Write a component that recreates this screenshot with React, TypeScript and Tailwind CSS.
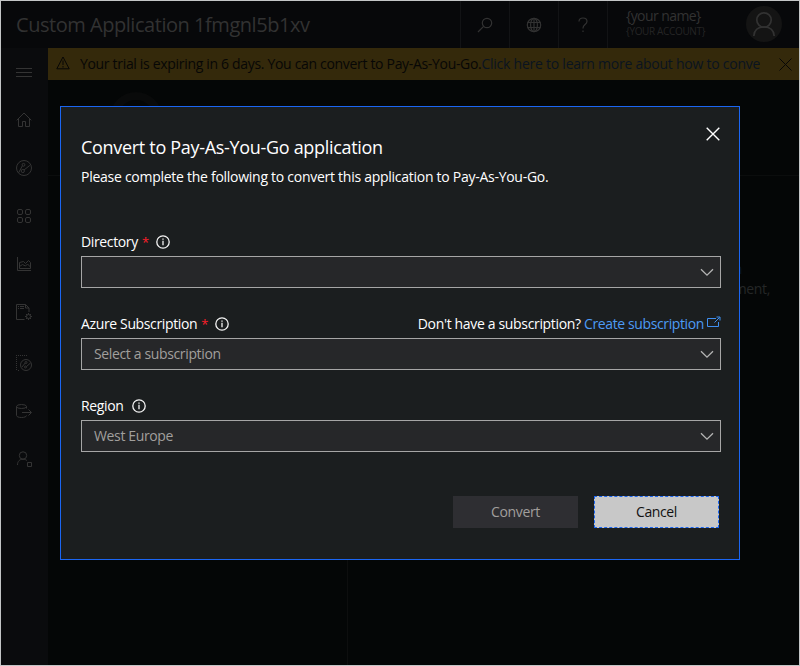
import type { ReactNode } from "react";

const stroke = { fill: "none", stroke: "currentColor", strokeWidth: 1 } as const;

function Chevron() {
  return (
    <svg width="14" height="9" viewBox="0 0 14 9" {...stroke} strokeWidth={1.3} className="text-[#b4b4b4]">
      <path d="M1 1.200 7 7.200 13 1.200" />
    </svg>
  );
}

function Info() {
  return (
    <svg width="14" height="14" viewBox="0 0 14 14" {...stroke} strokeWidth={1.3} className="text-[#f4f4f4]">
      <circle cx="7" cy="7" r="6.2" />
      <path d="M7 5.800v4.400M7 3.600v1.200" />
    </svg>
  );
}

function Select({ children }: { children?: ReactNode }) {
  return (
    <div className="flex h-8 items-center justify-between border border-[#a6a6a6] bg-[#262729] pr-[6px] pl-3 text-[#a19f9d]">
      <span>{children}</span>
      <Chevron />
    </div>
  );
}

function Cell({ children }: { children: ReactNode }) {
  return <div className="flex w-[49px] items-center justify-center border-l border-[#121315]">{children}</div>;
}

function Sidebar() {
  return (
    <nav className="flex w-[47px] shrink-0 flex-col bg-[#0a0b0d] pl-[15px] text-[#343434]">
      <svg width="16" height="48" viewBox="0 0 16 48" {...stroke} className="shrink-0">
        <path d="M0 20.500h16M0 24.500h16M0 28.500h16" />
      </svg>
      <svg width="16" height="48" viewBox="0 0 16 48" {...stroke} className="shrink-0">
        <path d="M.7 24.300 8 17l7.300 7.300M2.500 22.500v8h4v-5h3v5h4v-8" />
      </svg>
      <svg width="16" height="48" viewBox="0 0 16 48" {...stroke} className="shrink-0">
        <circle cx="8" cy="24" r="7.500" />
        <circle cx="7.500" cy="20.800" r="1.400" />
        <circle cx="6.800" cy="27" r="1.600" />
        <path d="m2.600 28.800 3.800-7M8 26l5.800-4.600" />
      </svg>
      <svg width="16" height="48" viewBox="0 0 16 48" {...stroke} className="shrink-0">
        <rect x="1.500" y="17.500" width="5" height="5" rx="1.5" />
        <rect x="9.500" y="17.500" width="5" height="5" rx="1.5" />
        <rect x="1.500" y="25.500" width="5" height="5" rx="1.5" />
        <rect x="9.500" y="25.500" width="5" height="5" rx="1.5" />
      </svg>
      <svg width="16" height="48" viewBox="0 0 16 48" {...stroke} className="shrink-0">
        <path d="M1.500 17v13.500H15M3.500 28.500v-6l4-1 2 2 3-3 2 2v6zM3.500 26.500l3-2 3 1.500 2-2 3 3" />
      </svg>
      <svg width="16" height="48" viewBox="0 0 16 48" {...stroke} className="shrink-0">
        <path d="M8.500 31.500h-8v-15h9l3.500 3.500v4M9.500 16.500V20H13" />
        <path d="M2 18.500h1M4 18.500h4M2 20.500h1M4 20.500h4" />
        <circle cx="12.500" cy="28.500" r="2" />
        <path d="M12.500 25v1.500M12.500 30.500V32M9 28.500h1.500M14.500 28.500H16M10 26l1 1M14 30l1 1M15 26l-1 1M11 30l-1 1" />
      </svg>
      <svg width="16" height="54" viewBox="0 0 16 54" {...stroke} className="shrink-0">
        <path d="M0 19.500H12M.5 21v14M2 34.500H4" strokeDasharray="1 1" />
        <circle cx="10" cy="29" r="5.500" />
        <circle cx="10" cy="26.500" r="1" />
        <circle cx="9.500" cy="31" r="1" />
        <path d="m6 31 3.200-4M10.500 30.500l4-3.500" />
      </svg>
      <svg width="16" height="45" viewBox="0 0 16 45" {...stroke} className="shrink-0">
        <ellipse cx="5.500" cy="16.500" rx="5" ry="2" />
        <path d="M.5 16.500v9c0 1.200 2.200 2 5 2s5-.8 5-2M10.500 16.500v2M6 22.500h9M12.500 19.500l3 3-3 3" />
      </svg>
      <svg width="16" height="48" viewBox="0 0 16 48" {...stroke} className="shrink-0">
        <circle cx="7" cy="20.500" r="3.700" />
        <path d="M1.500 30c0-4 2.300-5.800 5.500-5.800 1.700 0 3 .5 4 1.500M11.500 27.500h4v4h-4z" />
      </svg>
    </nav>
  );
}

export default function App() {
  return (
    <div className="relative flex h-[666px] w-[800px] flex-col overflow-hidden border border-[#c3c5c6] bg-[#040606] font-['Open_Sans','Noto_Sans',sans-serif] text-[14px] leading-5 tracking-[-0.36px]">
      <header className="flex h-[47px] shrink-0 bg-[#07080a] text-[#323232]">
        <h1 className="grow pt-[9px] pl-[15px] text-[20px] leading-[30px] tracking-[-0.46px] whitespace-nowrap">
          Custom Application 1fmgnl5b1xv
        </h1>
        <Cell>
          <svg width="16" height="16" viewBox="0 0 16 16" {...stroke} strokeWidth={1.2}>
            <circle cx="10" cy="6" r="4.7" />
            <path d="M6.600 9.400 1 15" />
          </svg>
        </Cell>
        <Cell>
          <svg width="16" height="16" viewBox="0 0 16 16" {...stroke} strokeWidth={1.2}>
            <circle cx="8" cy="8" r="6.700" />
            <ellipse cx="8" cy="8" rx="3.400" ry="6.700" />
            <path d="M8 1v14M1.500 5.500h13M1.500 10.500h13" />
          </svg>
        </Cell>
        <Cell>
          <svg width="10" height="16" viewBox="0 0 10 16" {...stroke} strokeWidth={1.2}>
            <path d="M1 4.500C1 2.200 2.500 1 5 1s4 1.300 4 3.200C9 7.500 5 7.500 5 11v.6M5 13.500V15" />
          </svg>
        </Cell>
        <div className="flex w-[192px] justify-between border-l border-[#121315] pr-[17px] pl-[18px]">
          <div className="pt-[6px] whitespace-nowrap">
            <div className="leading-[18px] tracking-[-0.57px]">{"{your name}"}</div>
            <div className="text-[10px] leading-[13px] tracking-[-0.35px] text-[#252525]">{"{YOUR ACCOUNT}"}</div>
          </div>
          <svg width="36" height="36" viewBox="0 0 36 36" className="mt-[5px]" {...stroke} strokeWidth={1.7}>
            <circle cx="18" cy="18" r="18" fill="#141414" stroke="none" />
            <circle cx="18" cy="14" r="7.200" />
            <path d="M7.800 30c.4-6 4.600-9 10.200-9s9.800 3 10.200 9" />
          </svg>
        </div>
      </header>

      <div className="flex grow">
        <Sidebar />
        <main className="flex grow flex-col overflow-hidden">
          <div className="flex h-8 items-center bg-[#34290b] pr-[6px] pl-2 text-[#070706]">
            <svg width="14" height="14" viewBox="0 0 14 14" {...stroke} className="mb-[2px] shrink-0">
              <path d="M7 1 .8 12.800h12.400zM7 4.500V9M7 10v1.500" />
            </svg>
            <div className="mr-[19px] ml-[10px] w-[680px] shrink-0 overflow-hidden tracking-[-0.32px] whitespace-nowrap">
              Your trial is expiring in 6 days. You can convert to Pay-As-You-Go.
              <span className="tracking-[-0.24px] text-[#0a1420]">Click here to learn more about how to convert</span>
            </div>
            <svg width="13" height="13" viewBox="0 0 13 13" {...stroke} className="shrink-0">
              <path d="m.5.5 12 12M12.500.5l-12 12" />
            </svg>
          </div>
          <div className="h-24 border-b border-[#0b0d0d] pt-3 pl-[62px]">
            <div className="size-[52px] rounded-full border-8 border-[#090a0a]" />
          </div>
          <div className="flex grow">
            <div className="w-[300px] border-r border-[#0d0e0e]" />
            <div className="flex grow flex-col items-end pt-[83px] pr-[29px] text-[#252727]">
              <span className="pr-[28px] text-[#0a1728]">Learn</span>
              <span>management,</span>
            </div>
          </div>
        </main>
      </div>

      <section className="absolute top-[105px] left-[59px] flex h-[454px] w-[680px] flex-col border border-[#1b66f2] bg-[#1b1e1f] pr-[18px] pl-5 text-white">
        <div className="flex justify-between pt-[19px]">
          <h2 className="pt-[9px] text-[18px] leading-6 tracking-[-0.31px] whitespace-nowrap">
            Convert to Pay-As-You-Go application
          </h2>
          <svg width="14" height="14" viewBox="0 0 14 14" {...stroke} strokeWidth={1.4} className="mt-[1px] mr-[1px]">
            <path d="m.7.7 12.600 12.600M13.300.7.7 13.300" />
          </svg>
        </div>
        <p className="mt-2 tracking-[-0.27px] whitespace-nowrap">
          Please complete the following to convert this application to Pay-As-You-Go.
        </p>

        <div className="mt-[45px] flex h-5 items-center">
          Directory<span className="ml-1 text-[13px] text-[#ff1f2a]">*</span>
          <span className="ml-[7px]"><Info /></span>
        </div>
        <div className="mt-1"><Select /></div>

        <div className="mt-[26px] flex h-5 items-center">
          Azure Subscription<span className="ml-1 text-[13px] text-[#ff1f2a]">*</span>
          <span className="ml-[7px]"><Info /></span>
          <span className="ml-auto tracking-[-0.34px]">
            Don't have a subscription? <span className="tracking-[-0.38px] text-[#4d9bf5]">Create subscription</span>
          </span>
          <svg width="14" height="12" viewBox="0 0 14 12" {...stroke} className="mb-1 ml-[3px] text-[#3f8ff0]">
            <path d="M9 2.500H.5v8h11V6M7.500 6.500l5-5M9.500 1h3.500v3.500" />
          </svg>
        </div>
        <div className="mt-1"><Select>Select a subscription</Select></div>

        <div className="mt-[26px] flex h-5 items-center">
          Region
          <span className="ml-2"><Info /></span>
        </div>
        <div className="mt-1"><Select>West Europe</Select></div>

        <div className="mt-11 flex justify-end gap-4 pr-[2px]">
          <button className="h-8 w-[125px] bg-[#2e2e32] text-[#a19f9d]">Convert</button>
          <button className="h-8 w-[125px] border border-dashed border-[#1b66f2] bg-[#c8c8c8] text-[#111111]">Cancel</button>
        </div>
      </section>
    </div>
  );
}
